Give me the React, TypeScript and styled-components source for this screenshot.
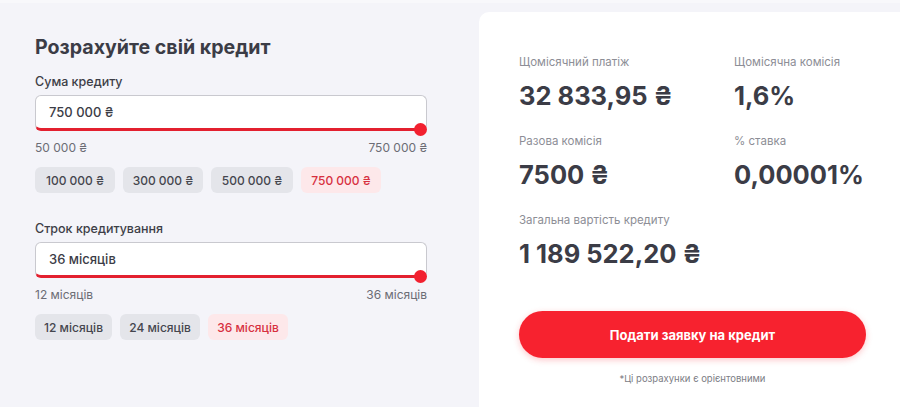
import React from "react";
import styled, { createGlobalStyle } from "styled-components";

const Global = createGlobalStyle`
  html, body { margin: 0; padding: 0; }
  body {
    background: #f4f4f9;
    font-family: Inter, "Noto Sans", sans-serif;
    color: #3b3c46;
    overflow: hidden;
  }
`;

const Page = styled.div`
  display: flex;
  width: 900px;
  height: 407px;
  box-sizing: border-box;
  border-top: 3px solid #f8f8fb;
`;

const Left = styled.div`
  width: 479px;
  box-sizing: border-box;
  padding: 32px 0 0 35px;
  display: flex;
  flex-direction: column;
`;

const Inner = styled.div`
  width: 392px;
  display: flex;
  flex-direction: column;
`;

const Title = styled.h1`
  margin: 0;
  font-size: 19.6px;
  line-height: 24px;
  font-weight: 700;
  color: #3b3c46;
`;

const Label = styled.div<{ $top: number }>`
  margin-top: ${(p) => p.$top}px;
  font-size: 12.5px;
  line-height: 16px;
  font-weight: 500;
  color: #3d3e47;
`;

const Field = styled.div`
  position: relative;
  margin-top: 5px;
  height: 36px;
  box-sizing: border-box;
  border: 1px solid #c9c9cf;
  border-bottom: 3px solid #e3202f;
  border-radius: 6px;
  background: #fff;
  display: flex;
  align-items: center;
  padding-left: 13px;
  font-size: 13px;
  font-weight: 500;
  color: #3b3c46;
`;

const Thumb = styled.span`
  position: absolute;
  right: -1px;
  bottom: -8px;
  width: 13px;
  height: 13px;
  border-radius: 50%;
  background: #f2202f;
`;

const Range = styled.div`
  margin-top: 9px;
  display: flex;
  justify-content: space-between;
  font-size: 12px;
  line-height: 16px;
  color: #6c6d75;
`;

const Chips = styled.div`
  margin-top: 11px;
  display: flex;
  gap: 8px;
`;

const Chip = styled.button<{ $active?: boolean; $w: number }>`
  width: ${(p) => p.$w}px;
  height: 26px;
  border: none;
  border-radius: 6px;
  padding: 0;
  font-family: inherit;
  font-size: 12px;
  font-weight: 500;
  background: ${(p) => (p.$active ? "#fde8ea" : "#e4e5ea")};
  color: ${(p) => (p.$active ? "#d7303f" : "#45464e")};
`;

const Card = styled.div`
  flex: 1;
  margin-top: 9px;
  background: #fff;
  border-radius: 10px 0 0 0;
  box-sizing: border-box;
  padding: 42px 34px 0 40px;
  display: flex;
  flex-direction: column;
`;

const Stats = styled.div`
  display: grid;
  grid-template-columns: 215px auto;
  row-gap: 21px;
`;

const Stat = styled.div`
  display: flex;
  flex-direction: column;
  gap: 10px;
`;

const StatLabel = styled.div`
  font-size: 11.5px;
  line-height: 16px;
  color: #8d8e96;
`;

const StatValue = styled.div`
  font-size: 25.5px;
  line-height: 32px;
  font-weight: 700;
  color: #3b3c46;
  white-space: nowrap;
`;

const Submit = styled.button`
  margin-top: 41px;
  height: 47px;
  width: 100%;
  border: none;
  border-radius: 24px;
  background: #f7222f;
  color: #fff;
  font-family: inherit;
  font-size: 13px;
  font-weight: 700;
  box-shadow: 0 2px 6px rgba(247, 34, 47, 0.25);
`;

const Note = styled.div`
  margin-top: 14px;
  text-align: center;
  font-size: 9.5px;
  line-height: 14px;
  color: #7c7d85;
`;

const amountChips = [
  { t: "100 000 ₴", w: 80 },
  { t: "300 000 ₴", w: 80 },
  { t: "500 000 ₴", w: 82 },
  { t: "750 000 ₴", w: 80, a: true },
];
const termChips = [
  { t: "12 місяців", w: 77 },
  { t: "24 місяців", w: 80 },
  { t: "36 місяців", w: 80, a: true },
];

const stats = [
  ["Щомісячний платіж", "32 833,95 ₴"],
  ["Щомісячна комісія", "1,6%"],
  ["Разова комісія", "7500 ₴"],
  ["% ставка", "0,00001%"],
  ["Загальна вартість кредиту", "1 189 522,20 ₴"],
];

export default function App() {
  return (
    <>
      <Global />
      <Page>
        <Left>
          <Inner>
            <Title>Розрахуйте свій кредит</Title>
            <Label $top={15}>Сума кредиту</Label>
            <Field>
              750 000 ₴
              <Thumb />
            </Field>
            <Range>
              <span>50 000 ₴</span>
              <span>750 000 ₴</span>
            </Range>
            <Chips>
              {amountChips.map((c) => (
                <Chip key={c.t} $w={c.w} $active={c.a}>
                  {c.t}
                </Chip>
              ))}
            </Chips>
            <Label $top={28}>Строк кредитування</Label>
            <Field>
              36 місяців
              <Thumb />
            </Field>
            <Range>
              <span>12 місяців</span>
              <span>36 місяців</span>
            </Range>
            <Chips>
              {termChips.map((c) => (
                <Chip key={c.t} $w={c.w} $active={c.a}>
                  {c.t}
                </Chip>
              ))}
            </Chips>
          </Inner>
        </Left>
        <Card>
          <Stats>
            {stats.map(([l, v]) => (
              <Stat key={l}>
                <StatLabel>{l}</StatLabel>
                <StatValue>{v}</StatValue>
              </Stat>
            ))}
          </Stats>
          <Submit>Подати заявку на кредит</Submit>
          <Note>*Ці розрахунки є орієнтовними</Note>
        </Card>
      </Page>
    </>
  );
}
